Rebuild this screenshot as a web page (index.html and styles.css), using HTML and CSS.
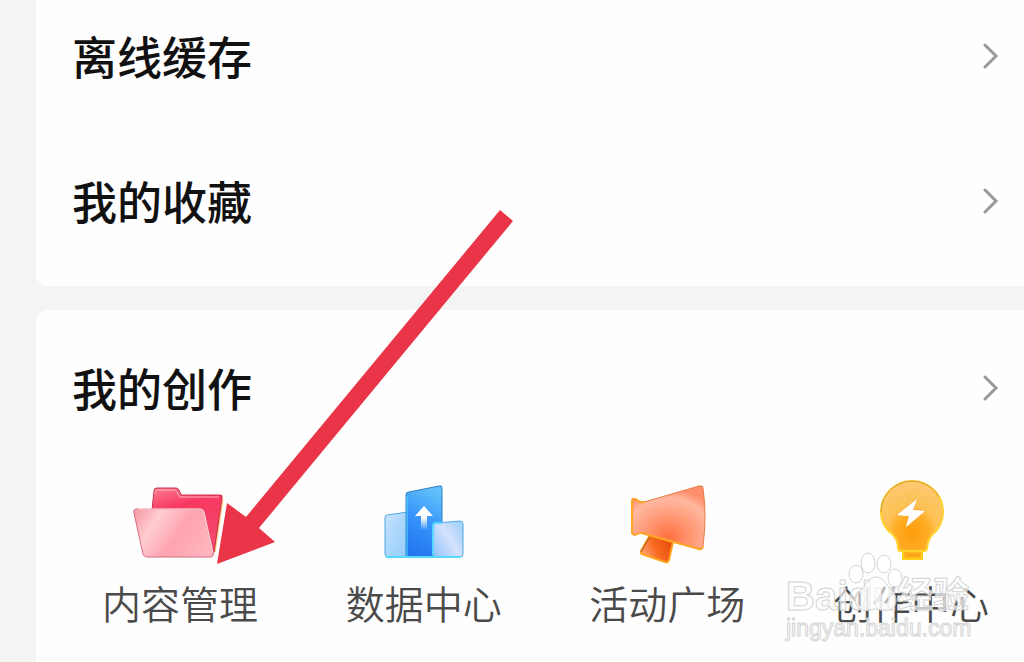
FILE: index.html
```html
<!DOCTYPE html>
<html lang="zh-CN">
<head>
<meta charset="UTF-8">
<meta name="viewport" content="width=device-width, initial-scale=1.0">
<title>我的创作</title>
<link rel="stylesheet" href="styles.css">
</head>
<body>
<main class="page">
    <nav class="card menu">
        <a class="row" href="#cache">
            <span>离线缓存</span>
            <svg class="chevron" viewBox="0 0 16 28"><path d="M2 3l11 11L2 25"/></svg>
        </a>
        <a class="row" href="#favorites">
            <span>我的收藏</span>
            <svg class="chevron" viewBox="0 0 16 28"><path d="M2 3l11 11L2 25"/></svg>
        </a>
    </nav>

    <section class="card create">
        <a class="row" href="#create">
            <span>我的创作</span>
            <svg class="chevron" viewBox="0 0 16 28"><path d="M2 3l11 11L2 25"/></svg>
        </a>
        <div class="tools">
            <a class="tool" href="#content">
                <svg class="icon" viewBox="0 0 96 96">
                    <defs>
                        <linearGradient id="folderBack" x1="0" y1="0" x2="0.3" y2="1">
                            <stop offset="0" stop-color="#fb7d93"/>
                            <stop offset="0.35" stop-color="#f8385f"/>
                            <stop offset="1" stop-color="#f0496c"/>
                        </linearGradient>
                        <linearGradient id="folderFront" x1="0" y1="0.2" x2="1" y2="0.6">
                            <stop offset="0" stop-color="#f6a0ab"/>
                            <stop offset="0.25" stop-color="#ffcdd2"/>
                            <stop offset="0.6" stop-color="#ffa3b0"/>
                            <stop offset="1" stop-color="#ffb4be"/>
                        </linearGradient>
                    </defs>
                    <path d="M90 27L82 80" fill="none" stroke="#ffc46b" stroke-width="3"/>
                    <path d="M20 38l2-19q0-3 3-3h19q2 0 3 2l2 5h39q3 0 2 3l-8 54q-1 4-5 4H20z" fill="url(#folderBack)" stroke="#c93050"/>
                    <path d="M23 22q0-4 3-4h16q2 0 3 2l3 5h39" fill="none" stroke="#ffb1be"/>
                    <path d="M5 37h63q3 0 4 3l9 41q1 4-3 4H15q-3 0-4-3L2 41q-1-4 3-4z" fill="url(#folderFront)" stroke="#d96b7e"/>
                    <path d="M6 37h62q3 0 4 3l9 41" fill="none" stroke="#ffe3e5"/>
                </svg>
                <span>内容管理</span>
            </a>
            <a class="tool" href="#data">
                <svg class="icon" viewBox="0 0 96 96">
                    <defs>
                        <linearGradient id="tower" x1="0.6" y1="0" x2="0.3" y2="1">
                            <stop offset="0" stop-color="#62c1fb"/>
                            <stop offset="0.5" stop-color="#3593fa"/>
                            <stop offset="1" stop-color="#2375ee"/>
                        </linearGradient>
                        <linearGradient id="blockLeft" x1="0" y1="0" x2="1" y2="1">
                            <stop offset="0" stop-color="#c7e2fc"/>
                            <stop offset="1" stop-color="#8fcbfa"/>
                        </linearGradient>
                        <linearGradient id="blockRight" x1="0" y1="1" x2="1" y2="0.3">
                            <stop offset="0" stop-color="#8fc1fb"/>
                            <stop offset="0.6" stop-color="#d4e2fc"/>
                            <stop offset="1" stop-color="#a9d2f8"/>
                        </linearGradient>
                        <linearGradient id="arrowFade" x1="0" y1="0" x2="0" y2="1">
                            <stop offset="0.5" stop-color="#fff"/>
                            <stop offset="1" stop-color="#fff" stop-opacity="0.1"/>
                        </linearGradient>
                    </defs>
                    <path d="M11 43l21-3v45H12q-3 0-3-3V46q0-3 2-3z" fill="url(#blockLeft)" stroke="#4fa6e2"/>
                    <path d="M33 20l30-6q3-1 3 2v69H30V23q0-3 3-3z" fill="url(#tower)" stroke="#2f7fc0"/>
                    <path d="M31 85V24" stroke="#4fd5ff"/>
                    <path d="M60 51l24-2q3 0 3 3v30q0 3-3 3H57V54q0-3 3-3z" fill="url(#blockRight)" stroke="#4fa6e2"/>
                    <path d="M10 85h75M57 83V54q0-3 3-3h6" fill="none" stroke="#58d8ff" stroke-width="2"/>
                    <path d="M48 34l9 10h-6v13h-6V44h-6z" fill="url(#arrowFade)"/>
                </svg>
                <span>数据中心</span>
            </a>
            <a class="tool" href="#events">
                <svg class="icon" viewBox="0 0 96 96">
                    <defs>
                        <radialGradient id="horn" cx="0.5" cy="0.8" r="0.75">
                            <stop offset="0" stop-color="#ff713f"/>
                            <stop offset="0.45" stop-color="#ff9a77"/>
                            <stop offset="0.8" stop-color="#ffb8a0"/>
                            <stop offset="1" stop-color="#ff8f6c"/>
                        </radialGradient>
                        <linearGradient id="handle" x1="0" y1="0.7" x2="1" y2="0.3">
                            <stop offset="0" stop-color="#ffab80"/>
                            <stop offset="0.45" stop-color="#f86c22"/>
                            <stop offset="1" stop-color="#e9480c"/>
                        </linearGradient>
                    </defs>
                    <path d="M31 63l-9 16q-1 2 1 3l23 8q3 1 4-2l4-18z" fill="url(#handle)" stroke="#ffa31f" stroke-width="2"/>
                    <path d="M31 64l-9 16" stroke="#a94b20"/>
                    <path d="M13 28q2-2 5 0 3 3 7 2l55-16q4-1 4 2 4 28 0 58 0 4-4 3L26 62q-5-2-8 0-3 2-5 0z" fill="url(#horn)" stroke="#e77d45"/>
                    <path d="M26 30q-5 1-8-2-5-3-5 1v32q2 3 5 1 3-2 8 0l54 15q3 1 4-3" fill="none" stroke="#ffa526" stroke-width="2"/>
                </svg>
                <span>活动广场</span>
            </a>
            <a class="tool" href="#center">
                <svg class="icon" viewBox="0 0 96 96">
                    <defs>
                        <radialGradient id="bulb" cx="0.5" cy="0.75" r="0.75">
                            <stop offset="0" stop-color="#ff9d0c"/>
                            <stop offset="0.35" stop-color="#ffac24"/>
                            <stop offset="0.55" stop-color="#fdc254"/>
                            <stop offset="1" stop-color="#fcc873"/>
                        </radialGradient>
                    </defs>
                    <path d="M40 79h19v8H40z" fill="#ffb01f" stroke="#ffcf1a" stroke-width="2"/>
                    <path d="M43 83h13" stroke="#f8a010" stroke-width="2"/>
                    <path d="M49 9a31 31 0 0 1 31 31c0 11-5 18-11 23-4 4-4 8-5 13q0 3-3 3H38q-3 0-3-3c0-6-1-9-5-13-7-6-12-12-12-23A31 31 0 0 1 49 9z" fill="url(#bulb)" stroke="#ffd12d" stroke-width="2"/>
                    <path d="M18 40a31 31 0 0 1 58-15" fill="none" stroke="#d69a45"/>
                    <path d="M54 27L34 43l12 1-3 11 19-16-12-1z" fill="#fff" stroke="#e28b1b" stroke-opacity="0.4"/>
                    <path d="M54 27L34 43l12 1-3 11 19-16-12-1z" fill="#fff"/>
                </svg>
                <span>创作中心</span>
            </a>
        </div>
    </section>

    <svg class="pointer" viewBox="0 0 297 354">
        <path d="M283 0l13 11L42 318l16 14L0 354l10-61 19 14z"/>
    </svg>

    <div class="watermark">
        <div class="brand"><span>Baidu</span><span class="brand-cn">经验</span></div>
        <div class="site">jingyan.baidu.com</div>
        <svg class="paw" viewBox="0 0 56 62">
            <ellipse cx="8" cy="22" rx="7" ry="9"/>
            <ellipse cx="20" cy="11" rx="7" ry="10"/>
            <ellipse cx="36" cy="12" rx="7" ry="9"/>
            <ellipse cx="47" cy="26" rx="7" ry="9"/>
            <path d="M28 25c8 0 10 8 15 13 8 7 6 19-3 20-5 1-8-1-12-1s-8 2-13 1c-9-2-10-13-2-20 5-5 8-13 15-13z"/>
        </svg>
    </div>
</main>
</body>
</html>
```

FILE: styles.css
```css
* {
    box-sizing: border-box;
}

body {
    margin: 0;
    background: #f4f4f4;
    font-family: "Noto Sans CJK SC", sans-serif;
    color: #111;
}

a {
    color: inherit;
    text-decoration: none;
}

.page {
    position: relative;
    display: flex;
    flex-direction: column;
    gap: 24px;
    min-height: 100vh;
    padding-left: 36px;
    overflow: hidden;
}

.card {
    background: #fefefe;
    border-radius: 12px 0 0 12px;
}

.menu {
    display: flex;
    flex-direction: column;
    gap: 81px;
    padding: 24px 25px 53px 36px;
    border-top-left-radius: 0;
}

.row {
    display: flex;
    align-items: center;
    justify-content: space-between;
    font-size: 45px;
    font-weight: 500;
    line-height: 64px;
}

.chevron {
    width: 16px;
    height: 28px;
    fill: none;
    stroke: #999;
    stroke-width: 3;
    stroke-linecap: round;
}

.create {
    flex: 1;
    padding: 46px 25px 32px 36px;
    border-bottom-left-radius: 0;
}

.tools {
    display: flex;
    justify-content: space-between;
    padding: 52px 10px 0 30px;
}

.tool {
    display: flex;
    flex-direction: column;
    align-items: center;
    gap: 10px;
    color: #4a4a4a;
    font-size: 39px;
    font-weight: 350;
    line-height: 48px;
}

.icon {
    width: 96px;
    height: 96px;
}

/* red arrow over both cards */
.pointer {
    position: absolute;
    top: 210px;
    left: 217px;
    width: 297px;
    height: 354px;
    fill: #e93547;
}

.watermark {
    position: absolute;
    right: 54px;
    bottom: 22px;
    width: 184px;
    color: rgba(255, 255, 255, 0.7);
    -webkit-text-stroke: 1px #d4d4d4;
    font-family: "Liberation Sans", "Noto Sans CJK SC", sans-serif;
    pointer-events: none;
}

.brand {
    display: flex;
    align-items: center;
    font-size: 40px;
    font-weight: 700;
    line-height: 40px;
}

.brand-cn {
    font-size: 36px;
}

.site {
    font-size: 23px;
    line-height: 24px;
    white-space: nowrap;
}

.paw {
    position: absolute;
    top: -24px;
    left: 62px;
    width: 56px;
    height: 62px;
    fill: rgba(255, 255, 255, 0.6);
    stroke: #d4d4d4;
}
```
